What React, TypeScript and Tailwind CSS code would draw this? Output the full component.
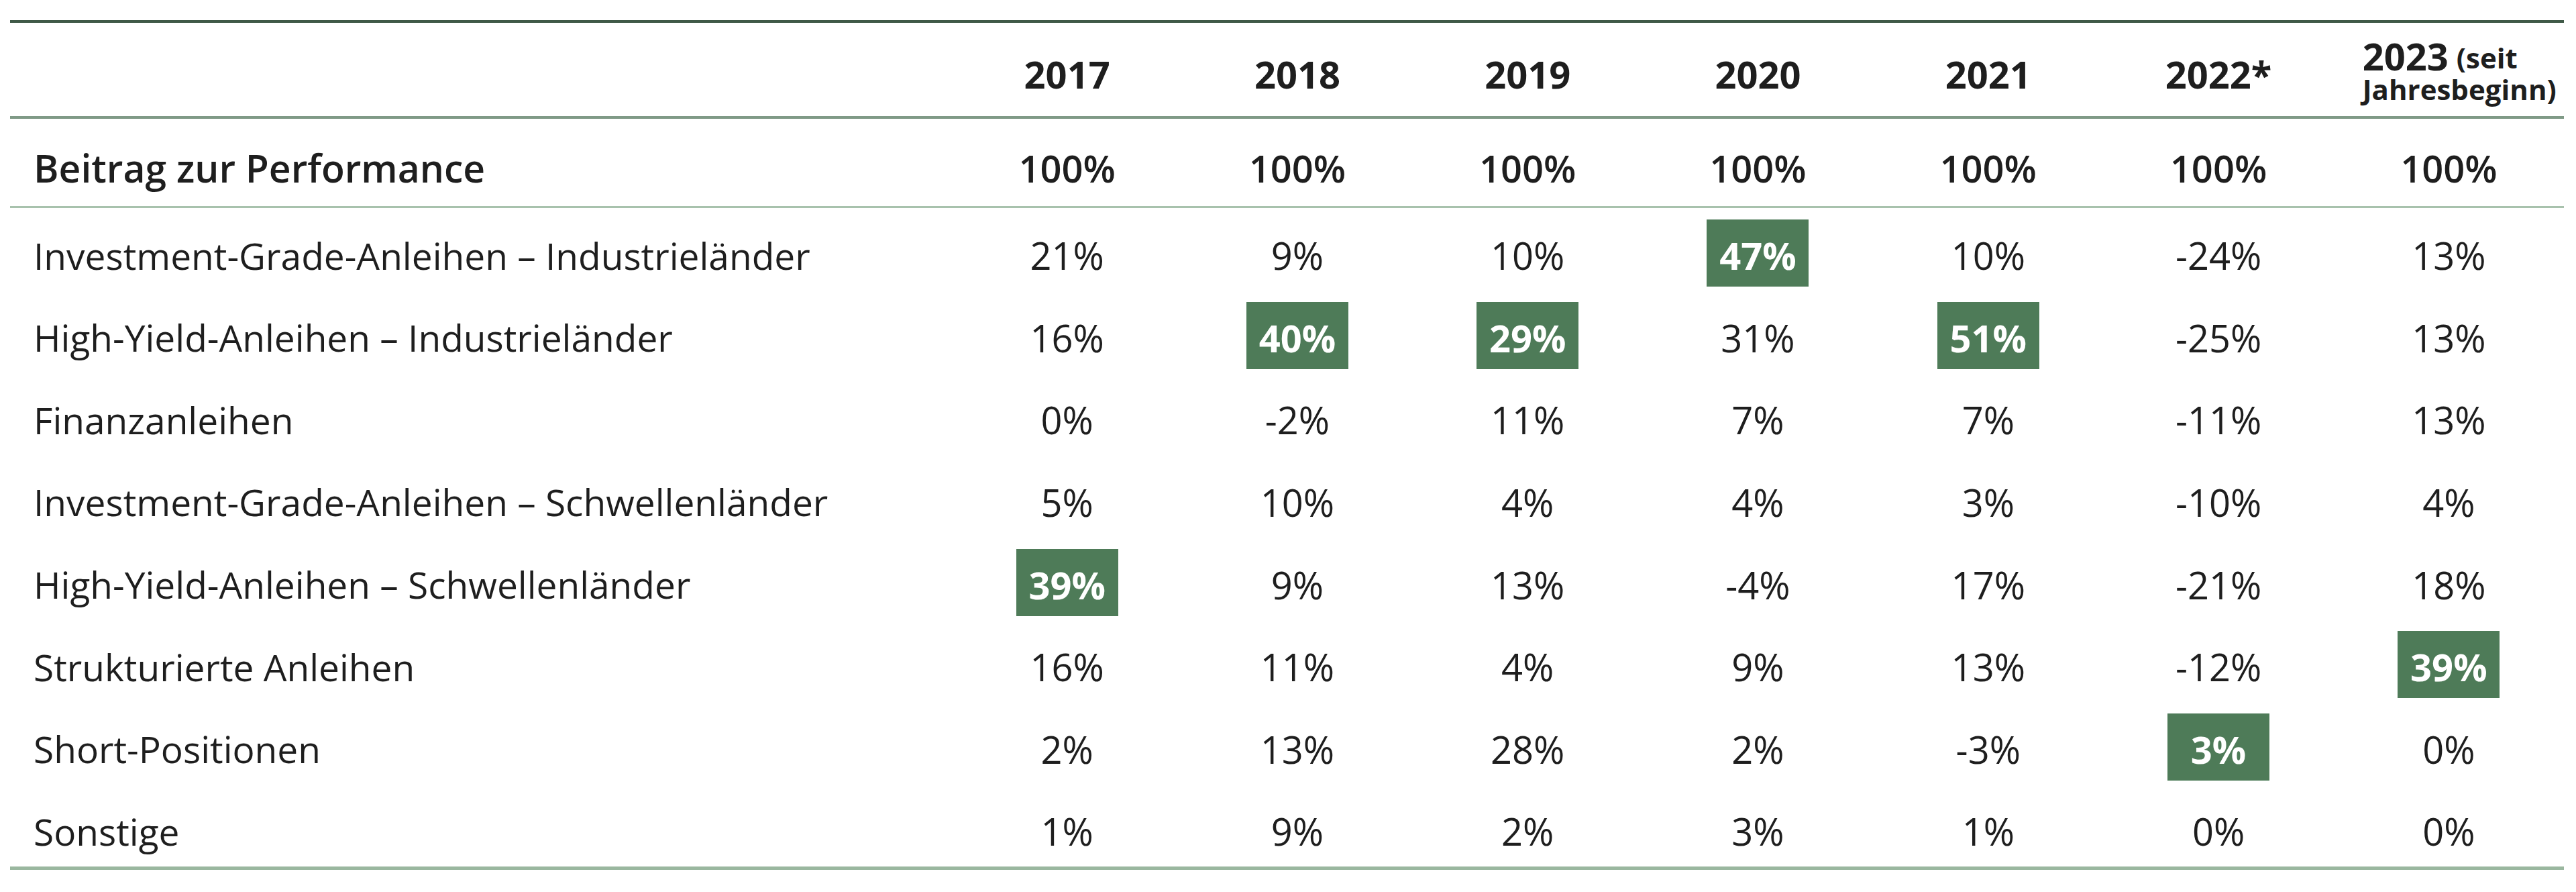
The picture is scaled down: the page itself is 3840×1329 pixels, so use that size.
const years = ["2017", "2018", "2019", "2020", "2021", "2022*"];

type Row = { label: string; values: string[] };

const rows: Row[] = [
  { label: "Investment-Grade-Anleihen – Industrieländer", values: ["21%", "9%", "10%", "47%", "10%", "-24%", "13%"] },
  { label: "High-Yield-Anleihen – Industrieländer", values: ["16%", "40%", "29%", "31%", "51%", "-25%", "13%"] },
  { label: "Finanzanleihen", values: ["0%", "-2%", "11%", "7%", "7%", "-11%", "13%"] },
  { label: "Investment-Grade-Anleihen – Schwellenländer", values: ["5%", "10%", "4%", "4%", "3%", "-10%", "4%"] },
  { label: "High-Yield-Anleihen – Schwellenländer", values: ["39%", "9%", "13%", "-4%", "17%", "-21%", "18%"] },
  { label: "Strukturierte Anleihen", values: ["16%", "11%", "4%", "9%", "13%", "-12%", "39%"] },
  { label: "Short-Positionen", values: ["2%", "13%", "28%", "2%", "-3%", "3%", "0%"] },
  { label: "Sonstige", values: ["1%", "9%", "2%", "3%", "1%", "0%", "0%"] },
];

// highlighted cells: row-col
const highlights = new Set(["0-3", "1-1", "1-2", "1-4", "4-0", "5-6", "6-5"]);

function Cell({ value, on }: { value: string; on: boolean }) {
  return (
    <div className="flex items-start justify-center pt-[17px]">
      <div
        className={`flex h-[100px] w-[152px] items-center justify-center pt-[6px] text-[56px] leading-none ${
          on ? "bg-[#4e7b58] font-bold text-white" : "text-[#1e1e1e]"
        }`}
      >
        {value}
      </div>
    </div>
  );
}

export default function App() {
  return (
    <div className="min-h-screen bg-white pt-[30px] font-['Open_Sans',sans-serif] text-[#1e1e1e]">
      <div className="ml-[15px] w-[3807px]">
        <div className="h-[4px] bg-[#3f5947]" />

        {/* header */}
        <div className="grid h-[139px] grid-cols-[1404px_repeat(7,1fr)]">
          <div />
          {years.map((y) => (
            <div
              key={y}
              className="flex items-center justify-center pt-[12px] text-[56px] font-bold leading-none"
            >
              {y}
            </div>
          ))}
          <div className="flex flex-col pl-[43px] pt-[28px] font-bold">
            <div className="flex h-[42px] items-end gap-[12px]">
              <span className="text-[56px] leading-[42px]">2023</span>
              <span className="text-[42px] leading-[36px]">(seit</span>
            </div>
            <div className="mt-[8px] text-[42px] leading-[42px]">Jahresbeginn)</div>
          </div>
        </div>
        <div className="h-[4px] bg-[#7f9a86]" />

        {/* total row */}
        <div className="grid h-[130px] grid-cols-[1404px_repeat(7,1fr)] text-[56px] font-semibold leading-none">
          <div className="flex items-center pl-[35px] pt-[16px] text-[57px]">Beitrag zur Performance</div>
          {Array.from({ length: 7 }).map((_, i) => (
            <div key={i} className="flex items-center justify-center pt-[16px]">
              100%
            </div>
          ))}
        </div>
        <div className="h-[3px] bg-[#a8c2ad]" />

        {rows.map((r, ri) => (
          <div key={r.label} className="grid h-[122.625px] grid-cols-[1404px_repeat(7,1fr)]">
            <div className="flex items-start pl-[35px] pt-[17px]">
              <div className="flex h-[100px] items-center pt-[6px] text-[55px] leading-none">
                {r.label}
              </div>
            </div>
            {r.values.map((v, ci) => (
              <Cell key={ci} value={v} on={highlights.has(`${ri}-${ci}`)} />
            ))}
          </div>
        ))}
        <div className="h-[5px] bg-[#9ab79f]" />
      </div>
    </div>
  );
}
